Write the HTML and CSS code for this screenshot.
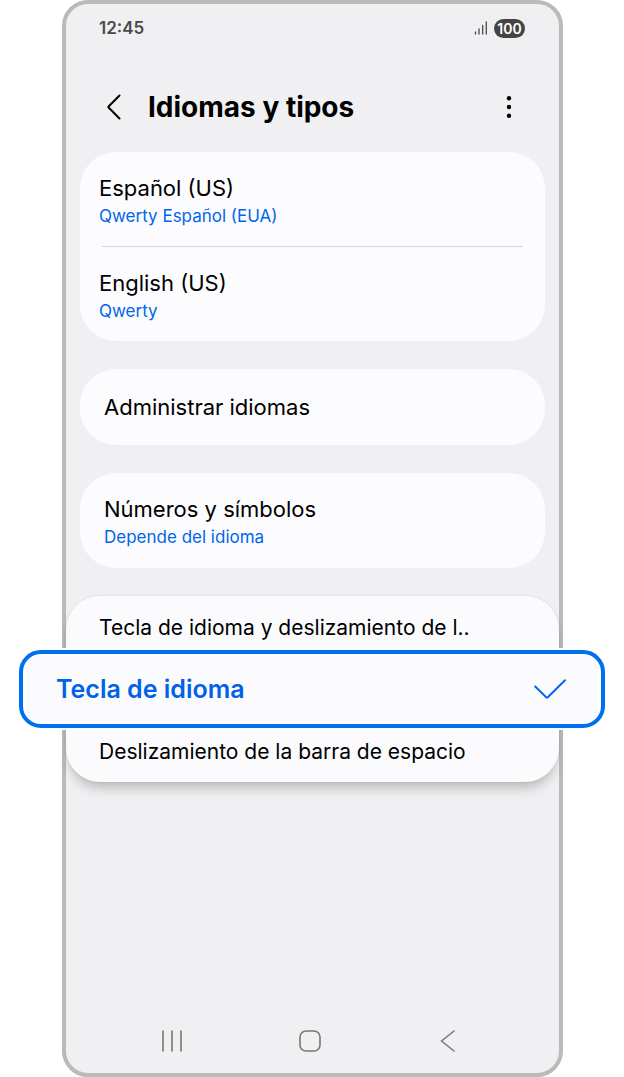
FILE: index.html
```html
<!DOCTYPE html>
<html lang="es">
<head>
  <meta charset="utf-8">
  <meta name="viewport" content="width=device-width, initial-scale=1">
  <title>Idiomas y tipos</title>
  <link rel="stylesheet" href="styles.css">
</head>
<body>
  <div class="phone">
    <!-- Status bar -->
    <div class="status-bar">
      <span class="clock">12:45</span>
      <div class="status-icons">
        <svg class="signal" width="14" height="14" viewBox="0 0 14 14" aria-hidden="true">
          <path d="M1.500 11v2M5 8v5M8.700 4.500v8.500M12.300 1v12" />
        </svg>
        <span class="battery">100</span>
      </div>
    </div>

    <header class="title-bar">
      <button class="icon-btn" type="button" aria-label="Atrás">
        <svg width="14" height="26" viewBox="0 0 14 26" aria-hidden="true">
          <path class="line" d="M12.500 1.500L1.800 12.200Q1 13 1.800 13.800L12.500 24.500" />
        </svg>
      </button>
      <h1>Idiomas y tipos</h1>
      <button class="icon-btn" type="button" aria-label="Más opciones">
        <svg width="6" height="22" viewBox="0 0 6 22" aria-hidden="true">
          <circle cx="3" cy="2.300" r="2.200" />
          <circle cx="3" cy="11" r="2.200" />
          <circle cx="3" cy="19.700" r="2.200" />
        </svg>
      </button>
    </header>

    <!-- Settings cards -->
    <main class="cards">
      <section class="card languages">
        <button class="row" type="button">
          <span class="name">Español (US)</span>
          <span class="value">Qwerty Español (EUA)</span>
        </button>
        <hr>
        <button class="row" type="button">
          <span class="name">English (US)</span>
          <span class="value">Qwerty</span>
        </button>
      </section>

      <section class="card">
        <button class="row single" type="button">
          <span class="name">Administrar idiomas</span>
        </button>
      </section>

      <section class="card">
        <button class="row" type="button">
          <span class="name">Números y símbolos</span>
          <span class="value">Depende del idioma</span>
        </button>
      </section>
    </main>

    <!-- Option menu with the selected item enlarged -->
    <div class="menu">
      <button class="option first" type="button">Tecla de idioma y deslizamiento de l..</button>
      <button class="option selected" type="button" aria-pressed="true">
        Tecla de idioma
        <svg width="32" height="20" viewBox="0 0 32 20" aria-hidden="true">
          <path d="M1.200 7.500L12.200 18.300Q13 19 13.800 18.300L31 1.200" />
        </svg>
      </button>
      <button class="option last" type="button">Deslizamiento de la barra de espacio</button>
    </div>

    <!-- System navigation -->
    <nav class="nav-bar">
      <button class="icon-btn" type="button" aria-label="Recientes">
        <svg width="22" height="22" viewBox="0 0 22 22" aria-hidden="true">
          <path d="M2 1v20M11 1v20M20 1v20" />
        </svg>
      </button>
      <button class="icon-btn" type="button" aria-label="Inicio">
        <svg width="22" height="22" viewBox="0 0 22 22" aria-hidden="true">
          <rect x="1" y="1" width="20" height="20" rx="6" />
        </svg>
      </button>
      <button class="icon-btn" type="button" aria-label="Volver">
        <svg width="22" height="22" viewBox="0 0 22 22" aria-hidden="true">
          <path d="M17 1L4.500 11L17 21" />
        </svg>
      </button>
    </nav>
  </div>
</body>
</html>
```
FILE: styles.css
```css
* {
  box-sizing: border-box;
}
body {
  margin: 0;
  padding: 0 61px 0 62px;
  background: #fff;
  font-family: Inter, sans-serif;
  color: #000;
}
button {
  font-family: inherit;
  color: inherit;
  background: none;
  border: 0;
  padding: 0;
  cursor: pointer;
}
svg {
  display: block;
  fill: none;
  stroke-linecap: round;
  stroke-linejoin: round;
}
.phone {
  display: flex;
  flex-direction: column;
  min-height: 100vh;
  border: 4px solid #bababa;
  border-radius: 26px;
  background: #f0f0f2;
}
.status-bar {
  display: flex;
  justify-content: space-between;
  align-items: center;
  padding: 14px 34px 0 33px;
}
.clock {
  font-size: 17px;
  line-height: 20px;
  font-weight: 600;
  color: #4a4a4a;
}
.status-icons {
  display: flex;
  align-items: center;
  gap: 6px;
}
.signal {
  stroke: #4a4a4a;
  stroke-width: 1.3;
}
.battery {
  width: 31px;
  border-radius: 10px;
  background: #444;
  color: #fff;
  font-size: 14px;
  line-height: 19px;
  font-weight: 600;
  text-align: center;
}
.title-bar {
  display: flex;
  align-items: center;
  height: 60px;
  margin-top: 39px;
  padding: 0 47px 0 41px;
}
.title-bar h1 {
  flex: 1;
  margin: 0 0 0 27px;
  font-size: 28px;
  line-height: 34px;
}
.line {
  stroke: #000;
  stroke-width: 2;
}
.title-bar circle {
  fill: #000;
}
.cards {
  display: flex;
  flex-direction: column;
  gap: 28px;
  padding: 15px 14px 28px;
}
.card {
  border-radius: 36px;
  background: #fcfcfe;
}
.row {
  display: flex;
  flex-direction: column;
  width: 100%;
  padding: 22px 24px 17px;
  text-align: left;
}
.languages .row {
  padding: 22px 19px 16px;
}
.row.single {
  padding: 24px;
}
.card hr {
  height: 1px;
  margin: 0 22px;
  border: 0;
  background: #d8d8da;
}
.name {
  font-size: 22px;
  line-height: 28px;
}
.value {
  font-size: 17px;
  line-height: 28px;
  color: #0065ea;
}
.menu {
  display: flex;
  flex-direction: column;
  border-radius: 34px;
  background: #fbfbfd;
  box-shadow: 0 10px 12px -4px rgba(0, 0, 0, 0.22), 0 0 3px rgba(0, 0, 0, 0.1);
}
.option {
  height: 54px;
  padding: 0 33px;
  font-size: 21px;
  line-height: 28px;
  text-align: left;
}
.option.first {
  padding-top: 10px;
}
.option.last {
  padding-bottom: 6px;
}
.option.selected {
  display: flex;
  justify-content: space-between;
  align-items: center;
  height: 78px;
  margin: 0 -46px 0 -47px;
  padding: 0 35px 0 33px;
  border: 4px solid #006ff0;
  border-radius: 22px;
  background: #fbfbfe;
  box-shadow: 0 0 0 2px #fff, inset 0 0 0 2px #fff;
  color: #0062e6;
  font-size: 25px;
  font-weight: 600;
}
.selected svg {
  stroke: #0068f0;
  stroke-width: 2;
}
.nav-bar {
  display: flex;
  justify-content: space-between;
  margin-top: auto;
  padding: 0 100px 21px 95px;
}
.nav-bar svg {
  stroke: #777;
  stroke-width: 1.6;
}
```
